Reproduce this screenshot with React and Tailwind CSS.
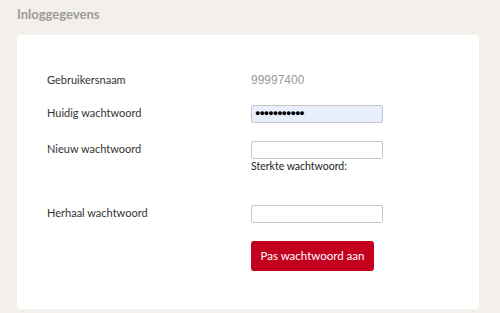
import React from "react";

export default function App() {
  const label = "w-[204px] text-[11px] leading-[16px] text-[#333]";
  const lf = { fontFamily: 'Lato, "Open Sans", sans-serif' };
  return (
    <div className="w-[500px] h-[313px] bg-[#f3efea] overflow-hidden pt-[6px] pl-[17px]" style={lf}>
      <div className="text-[13px] leading-[16px] font-bold text-[#9b9b9b]">
        Inloggegevens
      </div>
      <div className="mt-[13px] w-[462px] h-[274px] bg-white rounded-[4px] pt-[37px] pl-[30px]">
        <div className="flex h-[33px]">
          <div className={label}>Gebruikersnaam</div>
          <div className="text-[12px] leading-[16px] text-[#9a9a9a]" style={{ fontFamily: '"Liberation Sans", Arial, sans-serif' }}>99997400</div>
        </div>
        <div className="flex h-[36px]">
          <div className={label}>Huidig wachtwoord</div>
          <div className="w-[132px] h-[18px] border border-[#c6c6c6] rounded-[2px] bg-[#e8f0fe] flex items-center pl-[3px] text-[9px] tracking-[-1px] text-black" style={{ fontFamily: '"Liberation Sans", sans-serif' }}>
            ●●●●●●●●●●●
          </div>
        </div>
        <div className="flex h-[64px]">
          <div className={label}>Nieuw wachtwoord</div>
          <div className="flex flex-col">
            <div className="w-[132px] h-[18px] border border-[#c6c6c6] rounded-[2px] bg-white" />
            <div className="text-[10.5px] leading-[14px] text-[#222]">Sterkte wachtwoord:</div>
          </div>
        </div>
        <div className="flex h-[36px]">
          <div className={label}>Herhaal wachtwoord</div>
          <div className="w-[132px] h-[18px] border border-[#c6c6c6] rounded-[2px] bg-white" />
        </div>
        <div className="flex">
          <div className="w-[204px]" />
          <div className="w-[123px] h-[30px] bg-[#c4001f] rounded-[3px] flex items-center justify-center text-white text-[11.5px]">
            Pas wachtwoord aan
          </div>
        </div>
      </div>
    </div>
  );
}
